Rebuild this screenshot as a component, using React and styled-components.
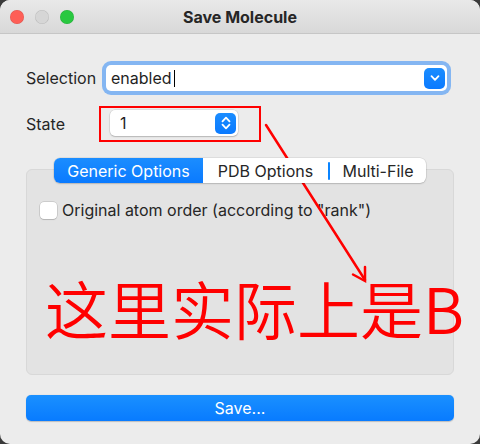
import React from 'react';
import styled, { createGlobalStyle } from 'styled-components';

const Global = createGlobalStyle`
  html, body { margin: 0; padding: 0; background: #3a3a3a; }
  body { width: 480px; height: 444px; overflow: hidden; font-family: Inter, "Noto Sans", sans-serif; color: #242424; }
`;

const Window = styled.div`
  position: relative;
  width: 480px;
  height: 444px;
  background: #ececec;
  border-radius: 10px;
  overflow: hidden;
  display: flex;
  flex-direction: column;
`;

const TitleBar = styled.div`
  height: 33px;
  flex: none;
  border-bottom: 1px solid #c6c6c6;
  background: linear-gradient(#e9e9e9, #d8d8d8);
  display: grid;
  grid-template-columns: 1fr auto 1fr;
  align-items: center;
  padding: 0 10px;
`;

const Lights = styled.div`
  display: flex;
  gap: 11px;
`;

const Light = styled.span`
  width: 14px;
  height: 14px;
  border-radius: 50%;
  background: ${(p) => p.$c};
  box-shadow: inset 0 0 0 0.5px rgba(0, 0, 0, 0.12);
`;

const Title = styled.div`
  font-weight: 700;
  font-size: 16px;
  color: #262626;
`;

const Body = styled.div`
  flex: 1;
  display: flex;
  flex-direction: column;
  padding: 31px 26px 23px;
  min-height: 0;
`;

const Form = styled.div`
  display: grid;
  grid-template-columns: 73px 1fr;
  row-gap: 15px;
  align-items: center;
`;

const Label = styled.div`
  font-size: 16px;
  color: #262626;
`;

const Combo = styled.div`
  height: 26px;
  box-sizing: border-box;
  background: #fff;
  border-radius: 5px;
  display: flex;
  align-items: center;
  justify-content: space-between;
  padding: 0 2px 0 5px;
  font-size: 16px;
  color: #1f1f1f;
  box-shadow: ${(p) =>
    p.$focus
      ? '0 0 0 4px #84b6f2'
      : '0 0 0 0.5px rgba(0,0,0,0.12), 0 1px 1.5px rgba(0,0,0,0.18)'};
  margin: ${(p) => (p.$focus ? '0 7px' : '0')};
  width: ${(p) => (p.$w ? `${p.$w}px` : 'auto')};
`;

const Caret = styled.span`
  display: inline-block;
  width: 1px;
  height: 17px;
  background: #000;
  margin-left: 2px;
  vertical-align: middle;
`;

const ComboText = styled.span`
  display: flex;
  align-items: center;
  padding-left: ${(p) => p.$pl || 0}px;
`;

const BlueKey = styled.span`
  width: 21px;
  height: 21px;
  border-radius: 5px;
  background: linear-gradient(#1b8dff, #0a7aff);
  display: flex;
  align-items: center;
  justify-content: center;
`;

const Annot = styled.div`
  justify-self: start;
  border: 2px solid #ff0000;
  padding: 2px 21px 4px 9px;
`;

const TabBar = styled.div`
  align-self: center;
  position: relative;
  z-index: 1;
  margin-top: 16px;
  margin-bottom: -14px;
  height: 25px;
  display: flex;
  background: #fff;
  border-radius: 6px;
  box-shadow: 0 0 0 0.5px rgba(0, 0, 0, 0.12), 0 1px 1.5px rgba(0, 0, 0, 0.15);
`;

const Tab = styled.div`
  position: relative;
  display: flex;
  align-items: center;
  justify-content: center;
  width: ${(p) => p.$w}px;
  font-size: 16px;
  color: ${(p) => (p.$on ? '#fff' : '#262626')};
  background: ${(p) => (p.$on ? 'linear-gradient(#1b8dff, #0a7aff)' : 'transparent')};
  border-radius: ${(p) => (p.$on ? '6px 0 0 6px' : '0')};
`;

const Sep = styled.span`
  width: 2px;
  height: 18px;
  align-self: center;
  border-radius: 1px;
  background: #0a84ff;
`;

const Panel = styled.div`
  flex: 1;
  background: #e3e3e3;
  border: 1px solid #d8d8d8;
  border-radius: 6px;
  padding: 30px 13px 0;
  display: flex;
  flex-direction: column;
`;

const CheckRow = styled.label`
  display: flex;
  align-items: center;
  gap: 5px;
  font-size: 16px;
  color: #262626;
`;

const Box = styled.span`
  width: 17px;
  height: 17px;
  box-sizing: border-box;
  border-radius: 4px;
  background: #fff;
  box-shadow: 0 0 0 0.5px rgba(0, 0, 0, 0.2), 0 1px 1px rgba(0, 0, 0, 0.12);
`;

const BigNote = styled.div`
  margin-top: 55px;
  padding-left: 5px;
  font-family: "Noto Sans CJK SC", "Noto Sans", sans-serif;
  font-weight: 350;
  font-size: 63px;
  line-height: 1;
  color: #ff0000;
  white-space: nowrap;
`;

const SaveButton = styled.button`
  margin-top: 20px;
  height: 26px;
  flex: none;
  border: none;
  border-radius: 5px;
  background: linear-gradient(#1a90ff, #087bff);
  color: #fff;
  font-family: inherit;
  font-size: 16px;
  box-shadow: 0 0.5px 1px rgba(0, 0, 0, 0.2);
`;

const Overlay = styled.svg`
  position: absolute;
  left: 0;
  top: 0;
  pointer-events: none;
`;

const Chevron = ({ up }) => (
  <path d={up ? 'M-3.5 1.8 L0 -1.8 L3.5 1.8' : 'M-3.5 -1.8 L0 1.8 L3.5 -1.8'} fill="none" stroke="#fff" strokeWidth="1.8" strokeLinecap="round" strokeLinejoin="round" />
);

export default function App() {
  return (
    <>
      <Global />
      <Window>
        <TitleBar>
          <Lights>
            <Light $c="#fe5f57" />
            <Light $c="#d6d6d6" />
            <Light $c="#29c840" />
          </Lights>
          <Title>Save Molecule</Title>
          <span />
        </TitleBar>
        <Body>
          <Form>
            <Label>Selection</Label>
            <Combo $focus>
              <ComboText>
                enabled
                <Caret />
              </ComboText>
              <BlueKey>
                <svg width="12" height="12" viewBox="-6 -6 12 12">
                  <Chevron />
                </svg>
              </BlueKey>
            </Combo>
            <Label>State</Label>
            <Annot>
              <Combo $w={128}>
                <ComboText $pl={5}>1</ComboText>
                <BlueKey>
                  <svg width="12" height="18" viewBox="-6 -9 12 18">
                    <g transform="translate(0,-3.5)"><Chevron up /></g>
                    <g transform="translate(0,3.5)"><Chevron /></g>
                  </svg>
                </BlueKey>
              </Combo>
            </Annot>
          </Form>
          <TabBar>
            <Tab $on $w={149}>Generic Options</Tab>
            <Tab $w={125}>PDB Options</Tab>
            <Sep />
            <Tab $w={96}>Multi-File</Tab>
          </TabBar>
          <Panel>
            <CheckRow>
              <Box />
              Original atom order (according to "rank")
            </CheckRow>
            <BigNote>这里实际上是B</BigNote>
          </Panel>
          <SaveButton>Save...</SaveButton>
        </Body>
        <Overlay width="480" height="444" viewBox="0 0 480 444">
          <g stroke="#ff0000" strokeWidth="2.5" strokeLinecap="round" fill="none">
            <line x1="266" y1="125" x2="365" y2="280" />
            <polyline points="365,267 365,281 353,274.5" strokeLinejoin="miter" />
          </g>
        </Overlay>
      </Window>
    </>
  );
}
